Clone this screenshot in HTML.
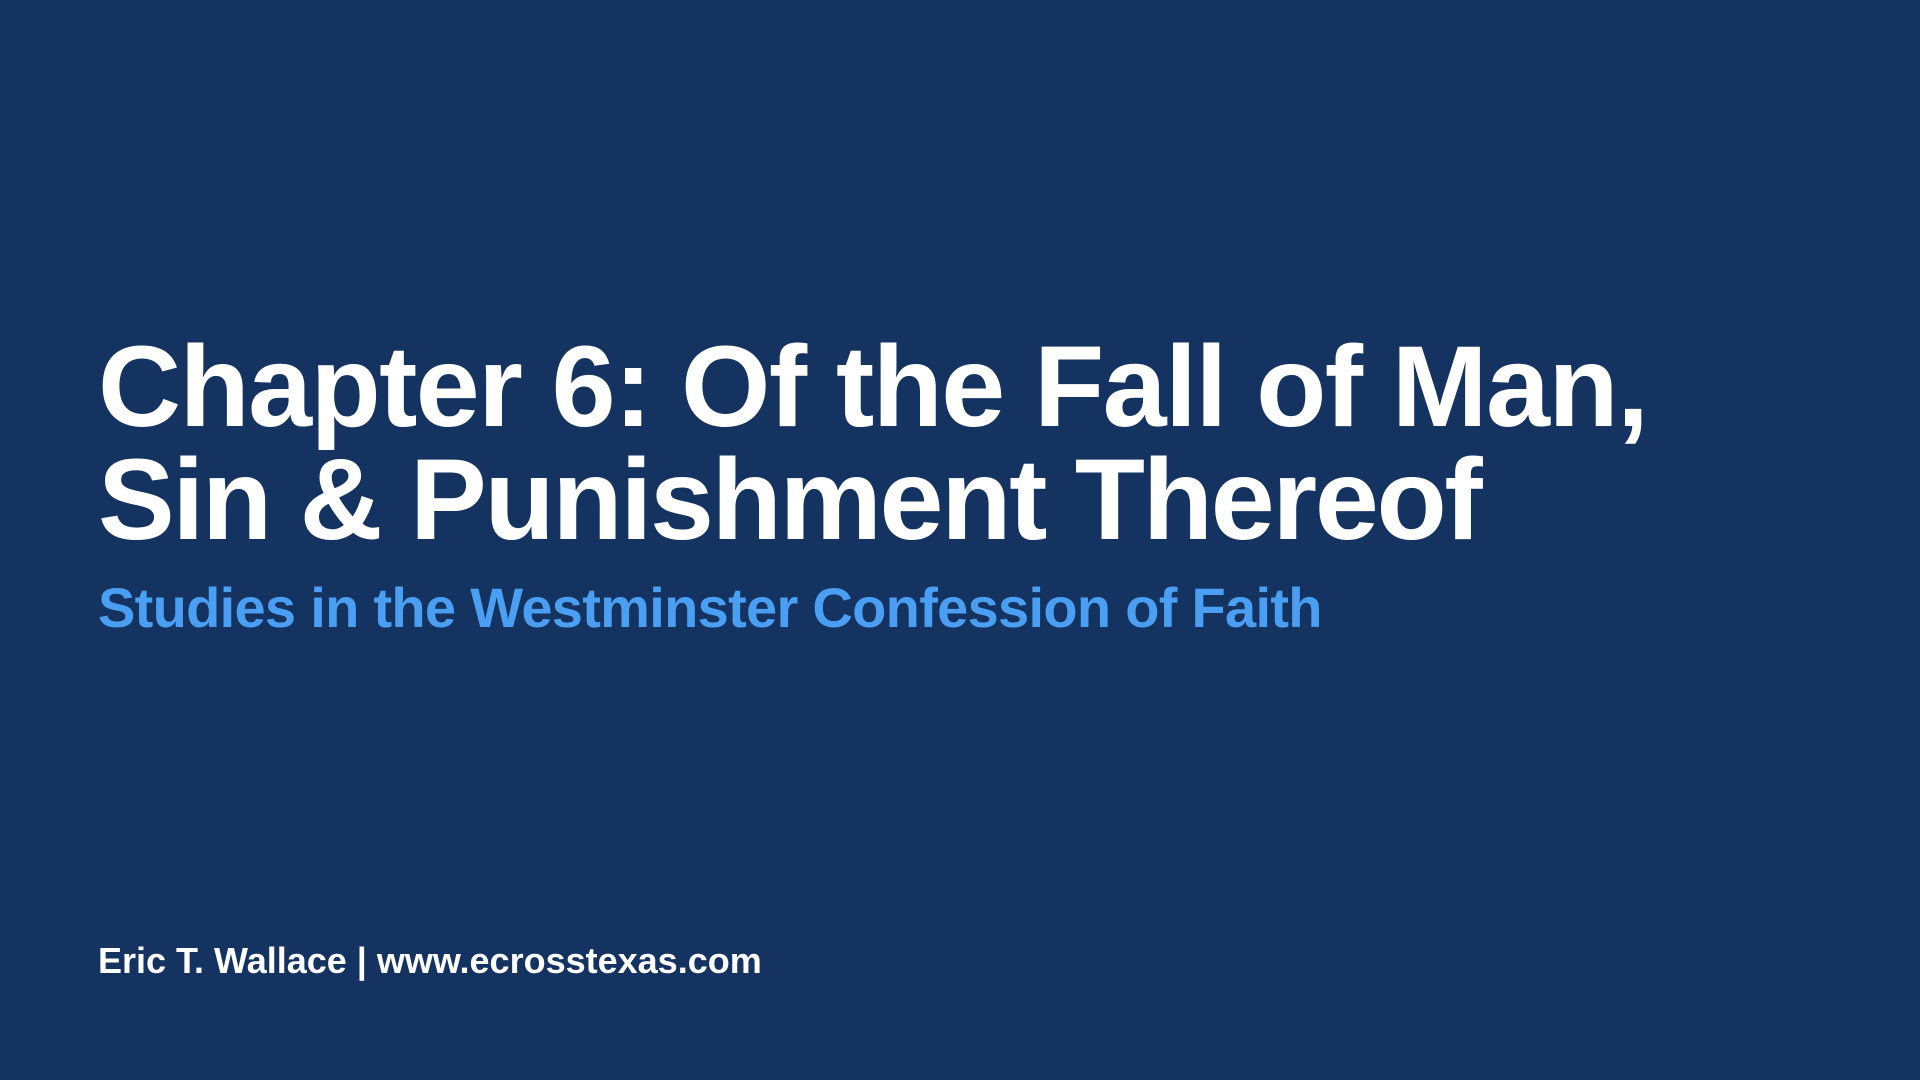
<!DOCTYPE html>
<html><head><meta charset="utf-8"><style>
html,body{margin:0;padding:0;}
body{width:1920px;height:1080px;background:#143360;position:relative;overflow:hidden;font-family:"Liberation Sans",Helvetica,Arial,sans-serif;font-weight:bold;}
.t{position:absolute;left:98px;color:#fff;font-size:115px;letter-spacing:-2.3px;line-height:113px;top:331px;white-space:nowrap;}
.t span{letter-spacing:-1.6px;}
.s{position:absolute;left:98px;top:575px;color:#4b9ff3;font-size:56px;letter-spacing:-0.7px;white-space:nowrap;}
.f{position:absolute;left:98px;top:940px;color:#fff;font-size:36px;letter-spacing:0px;white-space:nowrap;}
</style></head><body>
<div class="t"><span>Chapter 6: Of the Fall of Man,</span><br>Sin &amp; Punishment Thereof</div>
<div class="s">Studies in the Westminster Confession of Faith</div>
<div class="f">Eric T. Wallace | www.ecrosstexas.com</div>
</body></html>
